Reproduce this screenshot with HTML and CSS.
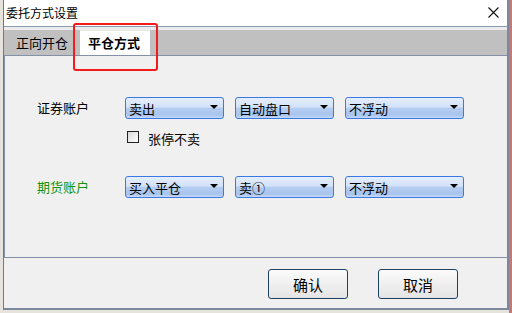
FILE: index.html
```html
<!DOCTYPE html>
<html lang="zh-CN">
<head>
<meta charset="utf-8">
<title>委托方式设置</title>
<link rel="stylesheet" href="styles.css">
</head>
<body>
<div class="window">
  <div class="titlebar">
    <span class="title">委托方式设置</span>
    <svg class="close" width="11" height="11" viewBox="0 0 11 11"><path d="M0.5 0.5 L10.5 10.5 M10.5 0.5 L0.5 10.5" stroke="#111" stroke-width="1.1" fill="none"/></svg>
  </div>
  <div class="sep"></div>
  <div class="tabbar">
    <div class="tab">正向开仓</div>
    <div class="tab active">平仓方式</div>
  </div>
  <div class="panel">
    <div class="row row1">
      <div class="label">证券账户</div>
      <div class="select s1"><span>卖出</span><i class="arrow"></i></div>
      <div class="select s2"><span>自动盘口</span><i class="arrow"></i></div>
      <div class="select s3"><span>不浮动</span><i class="arrow"></i></div>
    </div>
    <div class="checkrow">
      <span class="checkbox"></span><span class="checklabel">张停不卖</span>
    </div>
    <div class="row row2">
      <div class="label green">期货账户</div>
      <div class="select s1"><span>买入平仓</span><i class="arrow"></i></div>
      <div class="select s2"><span>卖①</span><i class="arrow"></i></div>
      <div class="select s3"><span>不浮动</span><i class="arrow"></i></div>
    </div>
  </div>
  <div class="footer">
    <button class="btn">确认</button>
    <button class="btn">取消</button>
  </div>
</div>
<div class="highlight"></div>
</body>
</html>
```
FILE: styles.css
```css
html, body {
  margin: 0;
  padding: 0;
}
body {
  width: 512px;
  height: 313px;
  overflow: hidden;
  position: relative;
  background: linear-gradient(to right, #e6e2dc 0, #e6e2dc 509px, #c27a78 509px);
  font-family: "Noto Sans CJK SC", "Noto Sans", sans-serif;
  color: #000;
}
.window {
  margin-left: 3px;
  width: 506px;
  height: 310px;
  box-sizing: border-box;
  border-left: 1px solid #6e7a8e;
  border-right: 2px solid #7c889c;
  border-bottom: 2px solid #7c889c;
  background: #f0f0f0;
  display: flex;
  flex-direction: column;
}
.titlebar {
  height: 26px;
  flex: none;
  background: #fff;
  display: flex;
  align-items: center;
  justify-content: space-between;
  padding: 0 8px 0 2px;
}
.title {
  font-size: 12px;
  line-height: 14px;
  letter-spacing: 0;
}
.close {
  display: block;
  margin-top: -1px;
}
.sep {
  height: 4px;
  flex: none;
  box-sizing: border-box;
  border-top: 1px solid #8a98b0;
  background: #ececec;
}
.tabbar {
  height: 25px;
  flex: none;
  background: #c0c0c0;
  display: flex;
  align-items: flex-end;
  padding-left: 9px;
  gap: 9px;
}
.tab {
  font-size: 13px;
  line-height: 23px;
  height: 23px;
  padding: 0 3px;
  margin-bottom: 1px;
}
.active {
  background: #fff;
  font-weight: bold;
  padding: 0 10px 0 8px;
  margin-bottom: 0;
  height: 24px;
  border-top: 1px solid #e8e8e8;
}
.panel {
  flex: none;
  height: 203px;
  box-sizing: border-box;
  border: 1px solid #8390a8;
  border-right: none;
  background: #f0f0f0;
  padding: 41px 0 0 32px;
}
.row {
  display: flex;
  align-items: center;
  height: 22px;
}
.row2 {
  margin-top: 32px;
}
.label {
  width: 88px;
  font-size: 13px;
  line-height: 16px;
}
.green {
  color: #139313;
}
.select {
  height: 22px;
  box-sizing: border-box;
  border: 1px solid #3a78e6;
  border-radius: 3px;
  background: linear-gradient(#e5eefc 0%, #d2e2f9 45%, #b4cdf1 52%, #a8c4ee 85%, #c6daf6 100%);
  display: flex;
  align-items: center;
  justify-content: space-between;
  padding: 0 5px 0 3px;
  font-size: 13px;
  margin-right: 11px;
}
.select span {
  line-height: 16px;
  margin-top: 1px;
}
.s1 { width: 99px; }
.s2 { width: 99px; }
.s3 { width: 119px; }
.arrow {
  width: 0;
  height: 0;
  border-left: 4px solid transparent;
  border-right: 4px solid transparent;
  border-top: 4px solid #000;
  margin-top: -2px;
}
.checkrow {
  display: flex;
  align-items: center;
  margin: 11px 0 0 90px;
  height: 14px;
}
.checkbox {
  width: 12px;
  height: 12px;
  box-sizing: border-box;
  border: 1px solid #222;
  background: linear-gradient(135deg, #d8d8d8, #ffffff);
}
.checklabel {
  font-size: 13px;
  line-height: 16px;
  margin-left: 9px;
  margin-top: 3px;
}
.footer {
  flex: 1;
  display: flex;
  justify-content: flex-end;
  align-items: flex-start;
  gap: 30px;
  padding: 11px 49px 0 0;
}
.btn {
  width: 80px;
  height: 30px;
  box-sizing: border-box;
  border: 1px solid #1e3f68;
  border-radius: 3px;
  background: linear-gradient(#fbfbfb, #e4e4e4);
  font-family: "Noto Sans CJK SC", "Noto Sans", sans-serif;
  font-size: 15px;
  color: #000;
  padding: 0;
}
.highlight {
  position: absolute;
  left: 73px;
  top: 23px;
  width: 85px;
  height: 48px;
  box-sizing: border-box;
  border: 2px solid #f21c1c;
  border-radius: 3px;
}
```
